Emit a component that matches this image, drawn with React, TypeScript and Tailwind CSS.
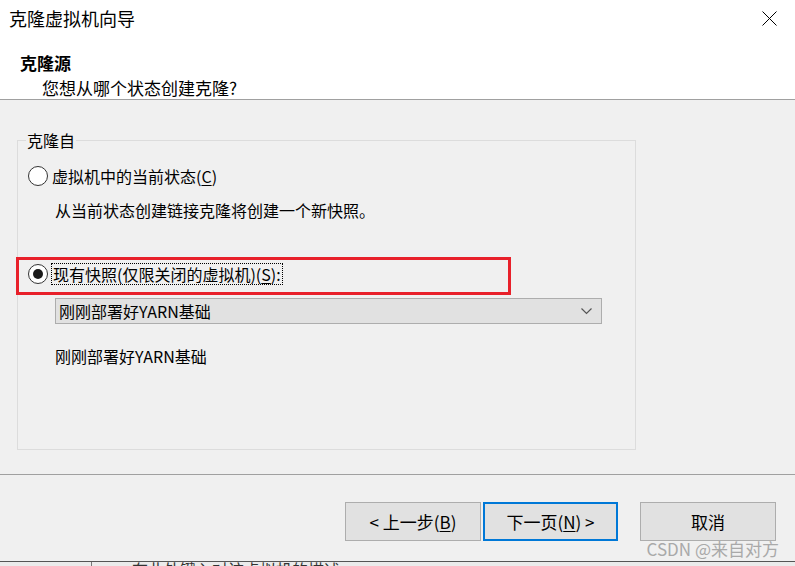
import React from "react";

function Radio({ checked }: { checked?: boolean }) {
  return (
    <span className="flex h-[20px] w-[20px] shrink-0 items-center justify-center rounded-full border border-[#333333] bg-white">
      {checked && <span className="h-[10px] w-[10px] rounded-full bg-[#1a1a1a]" />}
    </span>
  );
}

function Btn({ children, primary }: { children: React.ReactNode; primary?: boolean }) {
  return (
    <button
      className={
        primary
          ? "flex h-[39px] w-[135px] items-center justify-center border-2 border-[#0078d7] bg-[#e1e1e1] text-[17px] leading-none text-black"
          : "flex h-[39px] w-[136px] items-center justify-center border border-[#adadad] bg-[#e1e1e1] text-[17px] leading-none text-black"
      }
    >
      {children}
    </button>
  );
}

export default function App() {
  return (
    <div className="relative h-[566px] w-[795px] overflow-hidden bg-[#f0f0f0] font-['Noto_Sans_CJK_SC',sans-serif] text-black">
      {/* header */}
      <div className="h-[100px] border-b border-[#a0a0a0] bg-white">
        <div className="flex h-[36px] items-center justify-between pl-[9px] pr-[18px]">
          <span className="text-[18px] leading-[22px]">克隆虚拟机向导</span>
          <svg width="15" height="15" viewBox="0 0 15 15">
            <path d="M0.5 0.5 L14.5 14.5 M14.5 0.5 L0.5 14.5" stroke="#000" strokeWidth="1" />
          </svg>
        </div>
        <div className="mt-[16px] pl-[20px] text-[17px] font-bold leading-[22px]">克隆源</div>
        <div className="mt-[3px] pl-[42px] text-[17px] leading-[22px]">您想从哪个状态创建克隆?</div>
      </div>

      {/* group box */}
      <div className="relative ml-[17px] mt-[40px] h-[310px] w-[619px] border border-[#dcdcdc] pt-[23px] text-[16px] leading-[22px]">
        <span className="absolute -top-[12px] left-[8px] bg-[#f0f0f0] px-[1px] text-[16px] leading-[22px]">克隆自</span>

        <div className="flex items-center pl-[10px]">
          <Radio />
          <span className="ml-[4px] h-[24px] leading-[24px]">
            虚拟机中的当前状态(<span className="underline underline-offset-2">C</span>)
          </span>
        </div>

        <div className="ml-[37px] mt-[11px]">从当前状态创建链接克隆将创建一个新快照。</div>

        <div className="relative mt-[42px] flex items-center pl-[10px]">
          <span className="pointer-events-none absolute -left-[2px] -top-[6px] h-[38px] w-[495px] border-[3px] border-[#e8202a]" />
          <Radio checked />
          <span className="ml-[3px] h-[22px] border border-dotted border-black px-[1px] leading-[20px]">
            现有快照(仅限关闭的虚拟机)(<span className="underline underline-offset-2">S</span>):
          </span>
        </div>

        <div className="ml-[37px] mt-[13px] flex h-[26px] w-[547px] items-center justify-between border border-[#adadad] bg-[#e1e1e1] pl-[3px] pr-[9px]">
          <span className="leading-[22px]">刚刚部署好YARN基础</span>
          <svg width="11" height="7" viewBox="0 0 11 7">
            <path d="M0.5 0.5 L5.5 5.5 L10.5 0.5" fill="none" stroke="#555" strokeWidth="1.2" />
          </svg>
        </div>

        <div className="ml-[37px] mt-[21px]">刚刚部署好YARN基础</div>
      </div>

      {/* footer */}
      <div className="mt-[24px] border-t border-[#a0a0a0]" />
      <div className="mt-[27px] flex justify-end pr-[19px]">
        <Btn>
          &lt; 上一步(<span className="underline underline-offset-2">B</span>)
        </Btn>
        <div className="ml-[2px]">
          <Btn primary>
            下一页(<span className="underline underline-offset-2">N</span>) &gt;
          </Btn>
        </div>
        <div className="ml-[22px]">
          <Btn>取消</Btn>
        </div>
      </div>

      {/* window behind */}
      <div className="mt-[20px] flex h-[10px] border-t border-[#555555] bg-[#ebebeb]">
        <div className="w-[92px] border-r border-[#777777]" />
        <div className="overflow-hidden pl-[40px] text-[16px] leading-[14px] text-[#333]">在此处键入对该虚拟机的描述</div>
      </div>

      <span className="absolute bottom-[7px] right-[16px] text-[17px] leading-[20px] text-[#a9a9a9]">CSDN @来自对方</span>
    </div>
  );
}
